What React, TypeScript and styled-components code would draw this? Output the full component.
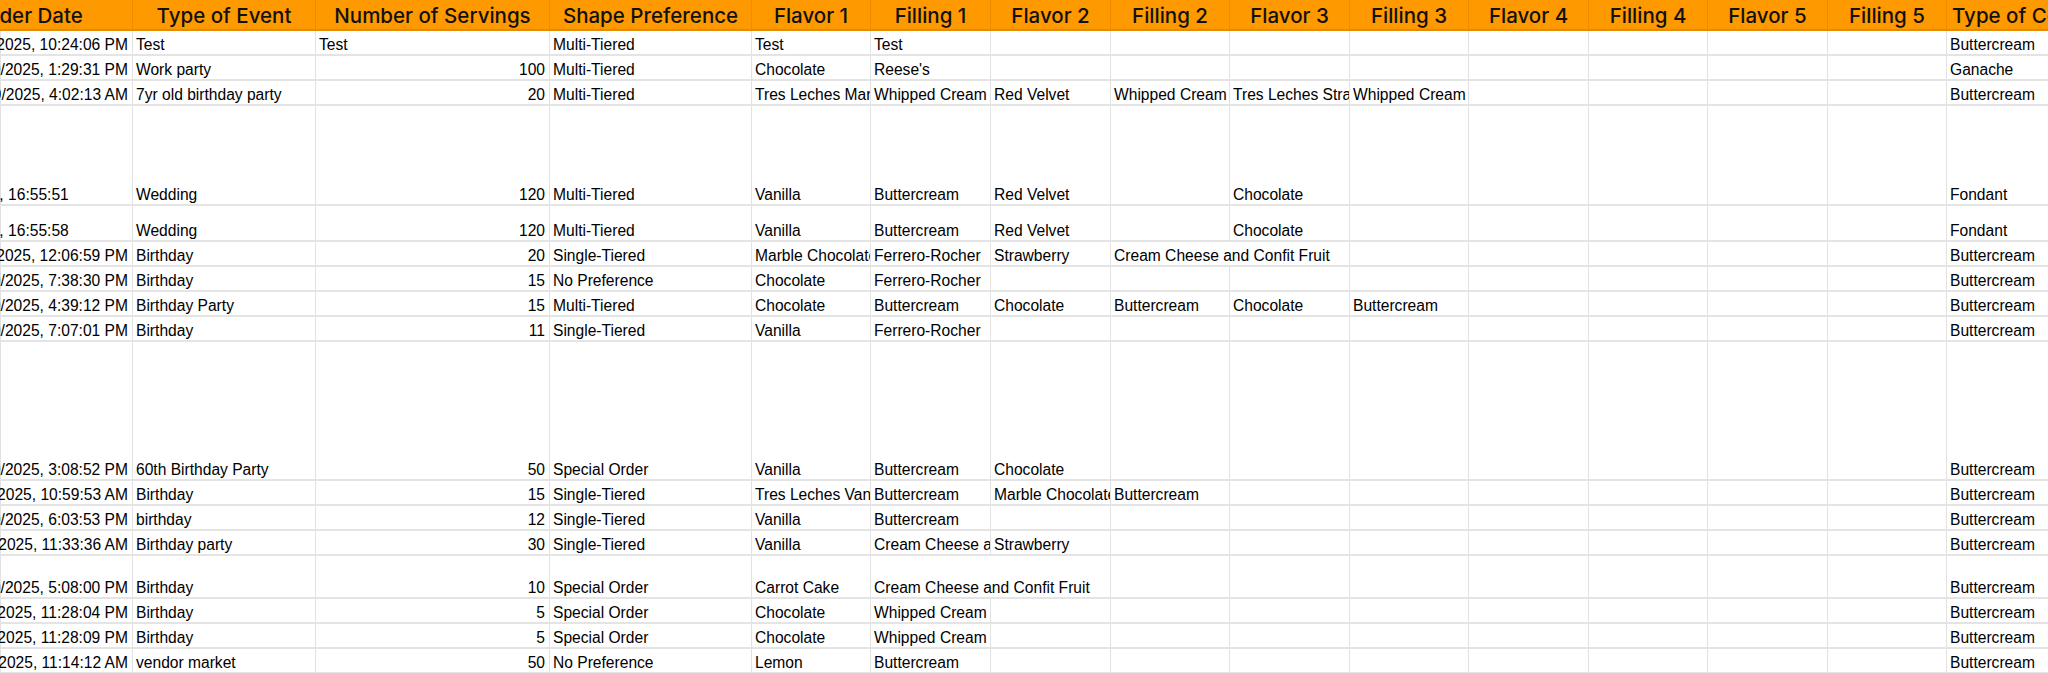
import React from "react";
import styled, { createGlobalStyle } from "styled-components";

const GlobalStyle = createGlobalStyle`
  html, body { margin: 0; padding: 0; background: #ffffff; }
  body { overflow: hidden; }
  * { box-sizing: border-box; }
`;

const COLS = [206, 183, 234, 202, 119, 120, 120, 119, 120, 119, 120, 119, 120, 119, 200];
const COL_TEMPLATE = COLS.map((w) => `${w}px`).join(" ");
const SCROLL_X = 73;

const Viewport = styled.div`
  width: 2048px;
  height: 673px;
  overflow: hidden;
  display: flex;
  flex-direction: column;
`;

const Strip = styled.div<{ $edge?: boolean }>`
  overflow: hidden;
  flex: none;
  box-shadow: ${(p) => (p.$edge ? "inset 1px 0 0 #e1e1e1" : "none")};
`;

const Track = styled.div`
  margin-left: -${SCROLL_X}px;
  width: max-content;
`;

const HeaderRow = styled.div`
  display: grid;
  grid-template-columns: ${COL_TEMPLATE};
  height: 31px;
`;

const HeaderCell = styled.div<{ $align?: "left" | "center" }>`
  background: #ff9900;
  border-right: 1px solid #ec8d00;
  border-bottom: 2px solid #e48b00;
  display: flex;
  align-items: flex-end;
  justify-content: ${(p) => (p.$align === "left" ? "flex-start" : "center")};
  padding: 0 5px 1px;
  font-family: "Inter", "Lato", sans-serif;
  font-weight: 500;
  font-size: 20.5px;
  line-height: 25px;
  color: #111111;
  white-space: nowrap;
  overflow: hidden;
`;

const Row = styled.div<{ $h: number }>`
  display: grid;
  grid-template-columns: ${COL_TEMPLATE};
  height: ${(p) => p.$h}px;
`;

const Cell = styled.div<{ $align: "left" | "right"; $span: number }>`
  grid-column: span ${(p) => p.$span};
  display: flex;
  align-items: flex-end;
  justify-content: ${(p) => (p.$align === "right" ? "flex-end" : "flex-start")};
  padding: 0 4px 0 3px;
  border-right: 1px solid #e2e2e2;
  border-bottom: 2px solid #e4e4e4;
  overflow: hidden;
  white-space: nowrap;
  font-family: "Liberation Sans", Arial, sans-serif;
  font-size: 15.6px;
  line-height: 18px;
  color: #000000;
`;

type CellSpec = string | number | null | { text: string; span: number };

type RowSpec = {
  h: number;
  date: string;
  dateLeft?: boolean;
  cells: CellSpec[];
};

const HEADERS = [
  "Order Date",
  "Type of Event",
  "Number of Servings",
  "Shape Preference",
  "Flavor 1",
  "Filling 1",
  "Flavor 2",
  "Filling 2",
  "Flavor 3",
  "Filling 3",
  "Flavor 4",
  "Filling 4",
  "Flavor 5",
  "Filling 5",
  "Type of Coating",
];

const e = null;

const ROWS: RowSpec[] = [
  { h: 25, date: "3/12/2025, 10:24:06 PM", cells: ["Test", "Test", "Multi-Tiered", "Test", "Test", e, e, e, e, e, e, e, e, "Buttercream"] },
  { h: 25, date: "3/19/2025, 1:29:31 PM", cells: ["Work party", 100, "Multi-Tiered", "Chocolate", "Reese's", e, e, e, e, e, e, e, e, "Ganache"] },
  { h: 25, date: "3/19/2025, 4:02:13 AM", cells: ["7yr old birthday party", 20, "Multi-Tiered", "Tres Leches Marble", "Whipped Cream", "Red Velvet", "Whipped Cream", "Tres Leches Strawberry", "Whipped Cream", e, e, e, e, "Buttercream"] },
  { h: 100, date: "14/4/2025, 16:55:51", dateLeft: true, cells: ["Wedding", 120, "Multi-Tiered", "Vanilla", "Buttercream", "Red Velvet", e, "Chocolate", e, e, e, e, e, "Fondant"] },
  { h: 36, date: "14/4/2025, 16:55:58", dateLeft: true, cells: ["Wedding", 120, "Multi-Tiered", "Vanilla", "Buttercream", "Red Velvet", e, "Chocolate", e, e, e, e, e, "Fondant"] },
  { h: 25, date: "4/12/2025, 12:06:59 PM", cells: ["Birthday", 20, "Single-Tiered", "Marble Chocolate", "Ferrero-Rocher", "Strawberry", { text: "Cream Cheese and Confit Fruit", span: 2 }, e, e, e, e, e, "Buttercream"] },
  { h: 25, date: "4/19/2025, 7:38:30 PM", cells: ["Birthday", 15, "No Preference", "Chocolate", "Ferrero-Rocher", e, e, e, e, e, e, e, e, "Buttercream"] },
  { h: 25, date: "4/19/2025, 4:39:12 PM", cells: ["Birthday Party", 15, "Multi-Tiered", "Chocolate", "Buttercream", "Chocolate", "Buttercream", "Chocolate", "Buttercream", e, e, e, e, "Buttercream"] },
  { h: 25, date: "4/29/2025, 7:07:01 PM", cells: ["Birthday", 11, "Single-Tiered", "Vanilla", "Ferrero-Rocher", e, e, e, e, e, e, e, e, "Buttercream"] },
  { h: 139, date: "5/19/2025, 3:08:52 PM", cells: ["60th Birthday Party", 50, "Special Order", "Vanilla", "Buttercream", "Chocolate", e, e, e, e, e, e, e, "Buttercream"] },
  { h: 25, date: "5/12/2025, 10:59:53 AM", cells: ["Birthday", 15, "Single-Tiered", "Tres Leches Vanilla", "Buttercream", "Marble Chocolate", "Buttercream", e, e, e, e, e, e, "Buttercream"] },
  { h: 25, date: "5/19/2025, 6:03:53 PM", cells: ["birthday", 12, "Single-Tiered", "Vanilla", "Buttercream", e, e, e, e, e, e, e, e, "Buttercream"] },
  { h: 25, date: "5/22/2025, 11:33:36 AM", cells: ["Birthday party", 30, "Single-Tiered", "Vanilla", "Cream Cheese and Confit Fruit", "Strawberry", e, e, e, e, e, e, e, "Buttercream"] },
  { h: 43, date: "5/29/2025, 5:08:00 PM", cells: ["Birthday", 10, "Special Order", "Carrot Cake", { text: "Cream Cheese and Confit Fruit", span: 2 }, e, e, e, e, e, e, e, "Buttercream"] },
  { h: 25, date: "6/02/2025, 11:28:04 PM", cells: ["Birthday", 5, "Special Order", "Chocolate", "Whipped Cream", e, e, e, e, e, e, e, e, "Buttercream"] },
  { h: 25, date: "6/02/2025, 11:28:09 PM", cells: ["Birthday", 5, "Special Order", "Chocolate", "Whipped Cream", e, e, e, e, e, e, e, e, "Buttercream"] },
  { h: 25, date: "6/12/2025, 11:14:12 AM", cells: ["vendor market", 50, "No Preference", "Lemon", "Buttercream", e, e, e, e, e, e, e, e, "Buttercream"] },
];

function renderCells(cells: CellSpec[]) {
  const out: React.ReactNode[] = [];
  const total = COLS.length - 1;
  let col = 0;
  for (let i = 0; i < cells.length && col < total; i += 1) {
    const c = cells[i];
    if (c && typeof c === "object") {
      out.push(
        <Cell key={col} $align="left" $span={c.span}>
          {c.text}
        </Cell>
      );
      col += c.span;
      continue;
    }
    const isNum = typeof c === "number";
    out.push(
      <Cell key={col} $align={isNum ? "right" : "left"} $span={1}>
        {c === null ? "" : String(c)}
      </Cell>
    );
    col += 1;
  }
  return out;
}

export default function App() {
  return (
    <>
      <GlobalStyle />
      <Viewport>
        <Strip>
          <Track>
            <HeaderRow>
              {HEADERS.map((h, idx) => (
                <HeaderCell key={h} $align={idx === HEADERS.length - 1 ? "left" : "center"}>
                  {h}
                </HeaderCell>
              ))}
            </HeaderRow>
          </Track>
        </Strip>
        <Strip $edge>
          <Track>
            {ROWS.map((r, idx) => (
              <Row key={idx} $h={r.h}>
                <Cell $align={r.dateLeft ? "left" : "right"} $span={1}>
                  {r.date}
                </Cell>
                {renderCells(r.cells)}
              </Row>
            ))}
          </Track>
        </Strip>
      </Viewport>
    </>
  );
}
